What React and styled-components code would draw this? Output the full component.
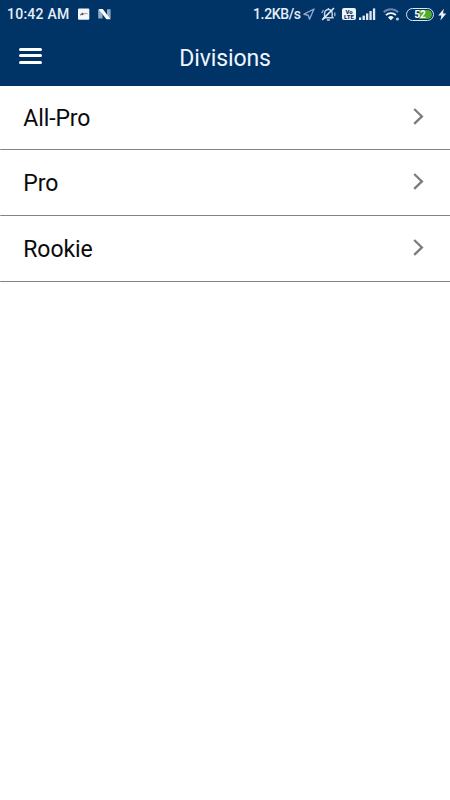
import React from "react";
import styled, { createGlobalStyle } from "styled-components";

const divisions = ["All-Pro", "Pro", "Rookie"];

export default function App() {
  return (
    <Page>
      <GlobalStyle />
      <StatusBar />
      <Header>
        <MenuButton type="button" aria-label="Menu">
          <MenuLine />
          <MenuLine />
          <MenuLine />
        </MenuButton>
        <Title>Divisions</Title>
      </Header>
      <List>
        {divisions.map((name) => (
          <Row key={name}>
            <RowName>{name}</RowName>
            <Chevron />
          </Row>
        ))}
      </List>
    </Page>
  );
}

function StatusBar() {
  return (
    <Status>
      <Clock>10:42 AM</Clock>
      <Icon width="12" height="12" $left={8}>
        <rect width="11.3" height="11.3" x="0" y="0.4" rx="1" fill="#f4f7fb" />
        <path d="M2 7.2L4.6 5l-.8 2 2.4-1.4" stroke="#444" strokeWidth="0.9" fill="none" />
        <path d="M5.4 5.6h4.4" stroke="#b98d94" strokeWidth="0.9" />
      </Icon>
      <Icon width="14" height="12" $left={8}>
        <path d="M0.2 1.5L4.6 3v7.6H0.2z" fill="#8fa9c8" />
        <path d="M9 1.2h3.6v9.6l-3.6-2z" fill="#8fa9c8" />
        <path d="M0.5 1H4.7l7.9 10.2H8.4z" fill="#fff" />
      </Icon>
      <Speed>1.2KB/s</Speed>
      <Icon width="12" height="12" $left={3}>
        <path
          d="M11 1L1 6.2l4.2 1 1.3 4z"
          fill="none"
          stroke="#8da7c9"
          strokeWidth="1.4"
          strokeLinejoin="round"
        />
      </Icon>
      <Icon width="15" height="14" $left={6}>
        <path
          d="M2.2 10.8h10.6M3.6 10.5V6.2a3.8 3.8 0 0 1 7.6 0v4.3M5.9 12.9h3M7.4 1v1.5"
          fill="none"
          stroke="#c3d2e6"
          strokeWidth="1.5"
        />
        <path d="M0.8 6.2L2.4 3M13.8 9.2V5.6" stroke="#8da7c9" strokeWidth="1.5" />
        <path d="M1.2 12.9L13 1" stroke="#e6eef8" strokeWidth="1.6" />
      </Icon>
      <Volte>
        <span>Vo</span>
        <span>LTE</span>
      </Volte>
      <Icon width="18" height="14" $left={3}>
        <path d="M0 10.5h2.2V13H0z" fill="#dfe9f5" />
        <path d="M3.5 8.6h2.4V13H3.5z" fill="#dfe9f5" />
        <path d="M7 6.4h2.3V13H7z" fill="#dfe9f5" />
        <path d="M10.4 4h2.3v9h-2.3z" fill="#dfe9f5" />
        <path d="M13.9 1.4h2.3V13h-2.3z" fill="#dfe9f5" />
      </Icon>
      <Icon width="19" height="14" $left={6}>
        <path d="M0.7 5.2a10.4 10.4 0 0 1 14.4 0" fill="none" stroke="#6785ae" strokeWidth="2" />
        <path d="M2.9 8.1a7.2 7.2 0 0 1 10 0" fill="none" stroke="#f4f8fc" strokeWidth="1.8" />
        <path d="M7.9 13.2L5 10.4a4.2 4.2 0 0 1 5.8 0z" fill="#f4f8fc" />
        <circle cx="14.4" cy="12" r="1.6" fill="#b6c8df" />
      </Icon>
      <Battery>
        <Charge>52</Charge>
      </Battery>
      <Icon width="9" height="13" $left={4}>
        <path d="M5.8 0.7L0.2 7.4h3.2L2.4 12.5 8.3 5.4H5z" fill="#eaf2fa" />
      </Icon>
    </Status>
  );
}

function Chevron() {
  return (
    <svg width="12" height="18" viewBox="0 0 12 18">
      <path d="M1.2 1L8.9 8.4l-7.7 7.4" fill="none" stroke="#7c7c7c" strokeWidth="2.3" />
    </svg>
  );
}

const GlobalStyle = createGlobalStyle`
  * {
    box-sizing: border-box;
  }
  body {
    margin: 0;
    background: #fff;
    font-family: Roboto, sans-serif;
  }
`;

const Page = styled.div`
  width: 100%;
  min-height: 100vh;
  background: #fff;
`;

const Status = styled.div`
  display: flex;
  align-items: center;
  height: 28px;
  padding: 0 3px 0 7px;
  background: #003366;
  color: #e6eef8;
`;

const Clock = styled.span`
  flex: none;
  width: 63px;
  font-size: 14px;
  font-weight: 500;
  letter-spacing: 0.25px;
  line-height: 28px;
  white-space: nowrap;
`;

const Speed = styled(Clock)`
  width: 47px;
  margin-left: auto;
  letter-spacing: -0.35px;
`;

const Icon = styled.svg`
  flex: none;
  margin-left: ${(props) => props.$left}px;
`;

const Volte = styled.div`
  display: flex;
  flex: none;
  flex-direction: column;
  align-items: center;
  justify-content: center;
  width: 14px;
  height: 12px;
  margin-left: 6px;
  border-radius: 2px;
  background: #eef4fb;
  color: #0b2f61;
  font-size: 6px;
  font-weight: 900;
  line-height: 5.5px;
`;

const Battery = styled.div`
  flex: none;
  width: 28px;
  height: 13px;
  margin-left: 4px;
  padding: 1px;
  border: 1px solid #dce7f4;
  border-radius: 7px;
`;

const Charge = styled.div`
  height: 9px;
  border-radius: 5px;
  background: linear-gradient(90deg, #003366 46%, #4fae2c 46%);
  color: #fff;
  font-size: 10px;
  font-weight: 700;
  line-height: 9.5px;
  text-align: center;
`;

const Header = styled.header`
  display: grid;
  grid-template-columns: 60px 1fr 60px;
  align-items: center;
  height: 57.7px;
  background: #003366;
`;

const MenuButton = styled.button`
  display: flex;
  flex-direction: column;
  gap: 3.2px;
  width: 23px;
  margin: 0 0 2px 19.2px;
  padding: 0;
  border: 0;
  background: none;
`;

const MenuLine = styled.span`
  height: 3.1px;
  border-radius: 2px;
  background: #fff;
`;

const Title = styled.h1`
  margin: 0;
  padding-top: 5px;
  color: #f0f6ff;
  font-size: 23px;
  font-weight: 400;
  letter-spacing: -0.1px;
  line-height: 28px;
  text-align: center;
`;

const List = styled.ul`
  margin: 0;
  padding: 0;
  list-style: none;
`;

const Row = styled.li`
  display: flex;
  align-items: center;
  justify-content: space-between;
  height: 65.7px;
  padding: 0 25px 1px 23.3px;
  border-bottom: 1px solid #838383;
  border-bottom-left-radius: 1px;

  &:first-child {
    height: 64.6px;
  }
`;

const RowName = styled.span`
  padding-top: 4px;
  color: #0a0a0a;
  font-size: 23px;
  letter-spacing: -0.1px;
  line-height: 28px;
`;
